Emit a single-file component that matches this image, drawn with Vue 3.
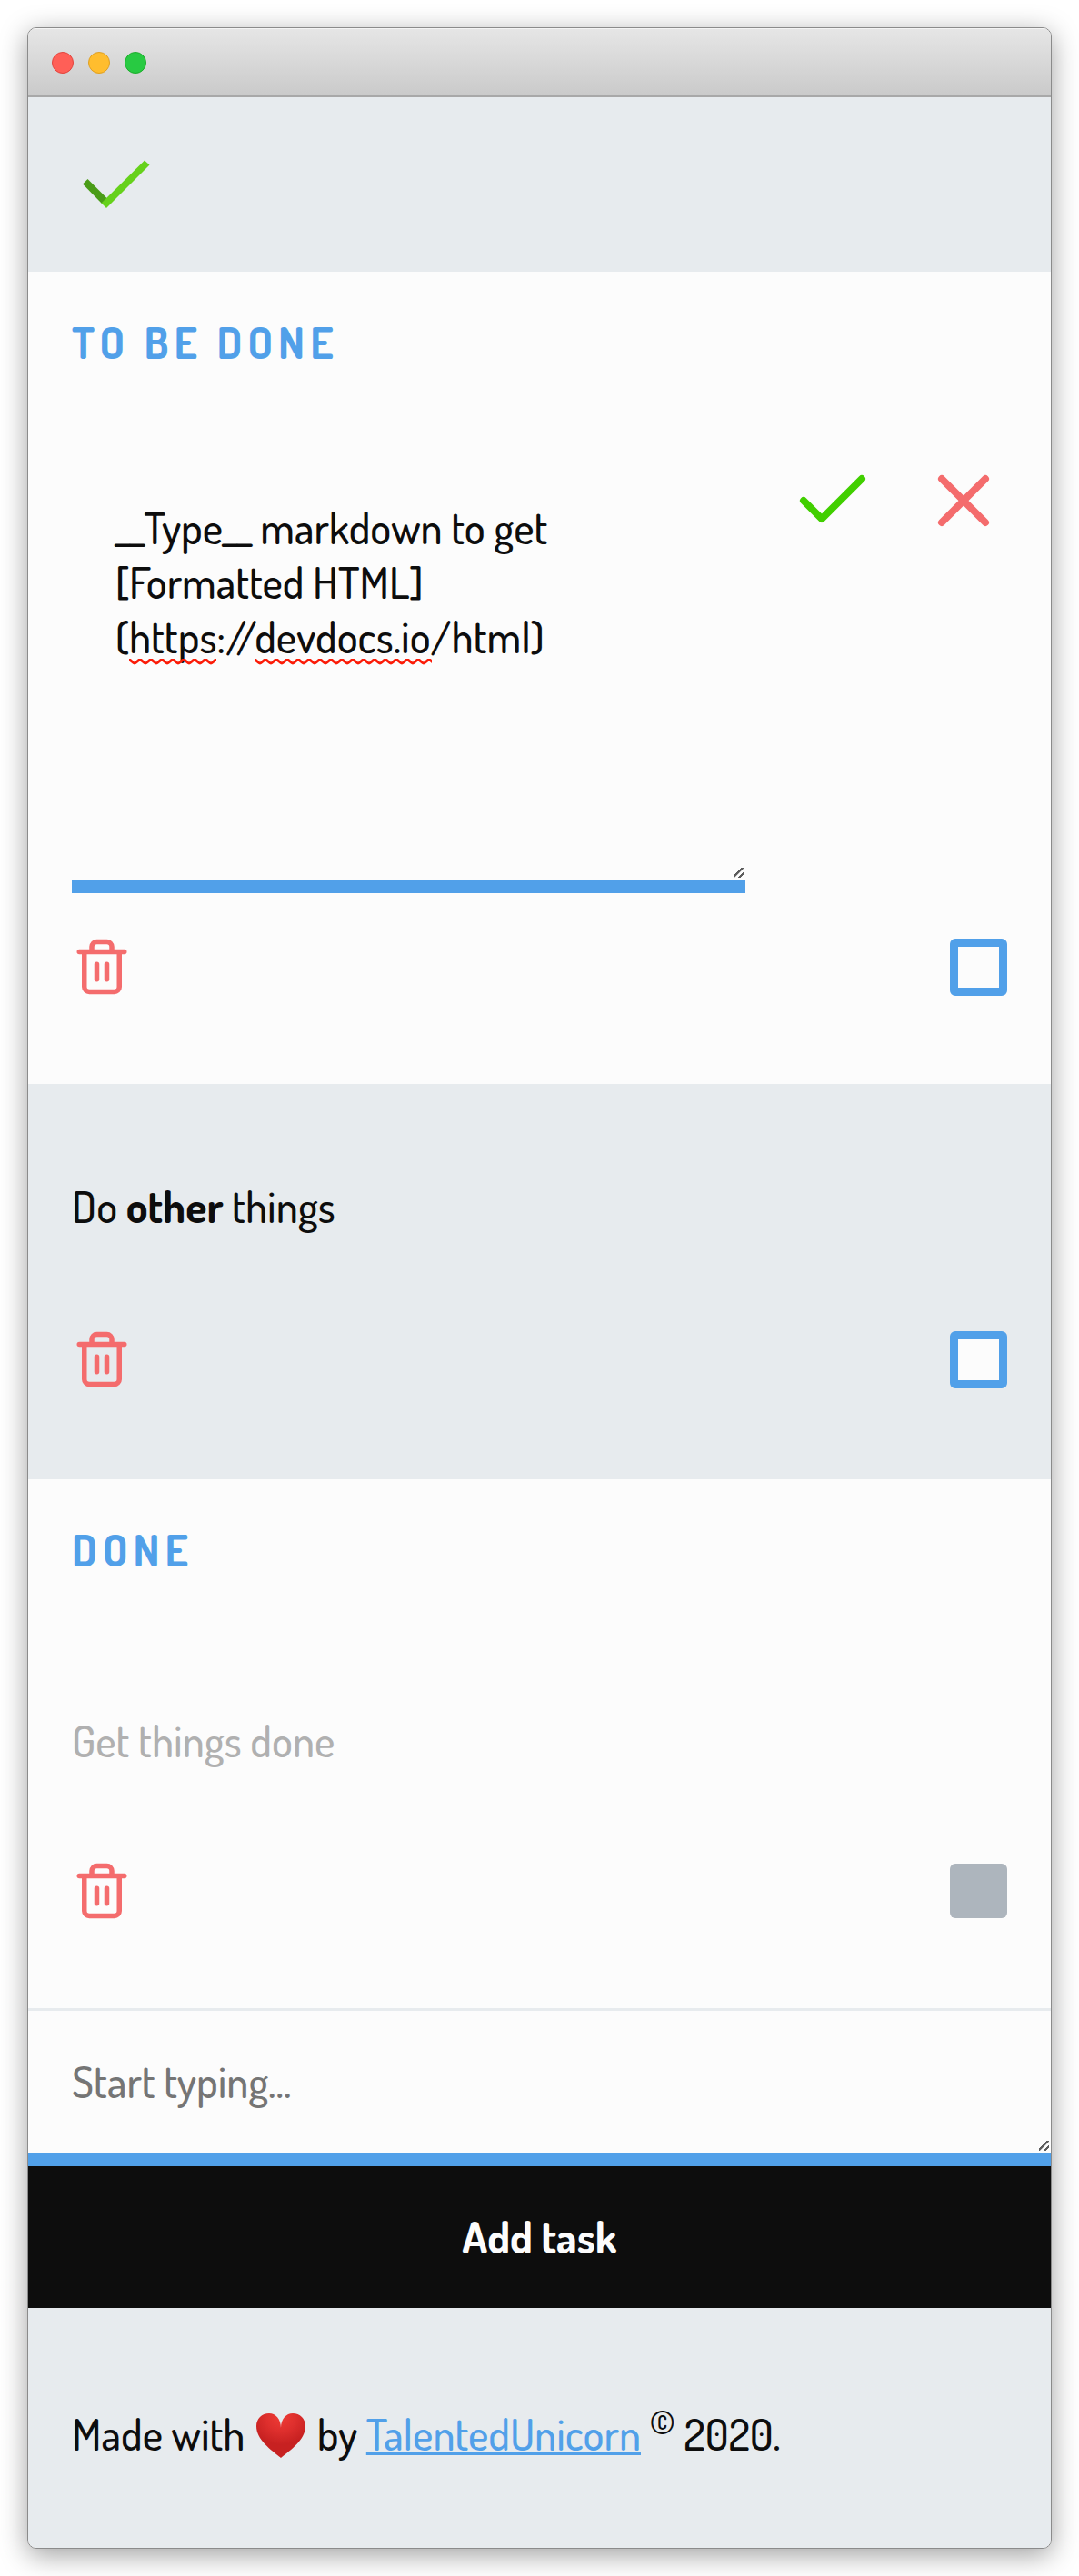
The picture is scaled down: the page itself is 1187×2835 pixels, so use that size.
<script setup>
import { ref } from 'vue'

const draft = ref('__Type__ markdown to get\n[Formatted HTML]\n(https://devdocs.io/html)')
const newTask = ref('')

// Wavy line used for the spell-check marks
function wave(width) {
  let d = 'M0 1'
  for (let x = 6, down = true; x <= width; x += 6, down = !down) {
    const from = down ? 1 : 5
    const to = down ? 5 : 1
    d += ` C${x - 4} ${from} ${x - 2} ${to} ${x} ${to}`
  }
  return d
}
</script>

<template>
  <div class="desktop">
    <div class="window">
      <div class="titlebar">
        <span class="light close"></span>
        <span class="light minimise"></span>
        <span class="light expand"></span>
      </div>

      <header class="header">
        <svg class="icon" viewBox="0 0 96 96" role="img" aria-label="Tasks">
          <path fill="#4a9c17" d="M12 47.5 17.500 42 39 63.500 33 69z" />
          <path fill="#66d11b" d="M80 21.500 85.500 26.500 38 74 32.500 68.500z" />
        </svg>
      </header>

      <main>
        <section>
          <h2>TO BE DONE</h2>
          <ul class="tasks">
            <li class="task">
              <div class="editor">
                <div class="field">
                  <textarea v-model="draft" class="draft" aria-label="Edit task" spellcheck="false"></textarea>
                  <svg class="mark mark-first" width="96" height="7" aria-hidden="true"><path :d="wave(96)" /></svg>
                  <svg class="mark mark-second" width="195" height="7" aria-hidden="true"><path :d="wave(198)" /></svg>
                </div>
                <button class="plain" type="button" aria-label="Save">
                  <svg class="icon stroke save" viewBox="0 0 24 24"><path d="M20 6 9 17l-5-5" /></svg>
                </button>
                <button class="plain" type="button" aria-label="Cancel">
                  <svg class="icon stroke danger" viewBox="0 0 24 24"><path d="M18 6 6 18M6 6l12 12" /></svg>
                </button>
              </div>
              <div class="actions">
                <button class="plain" type="button" aria-label="Delete">
                  <svg class="trash stroke danger" viewBox="0 0 24 24">
                    <path d="M3 6h18M19 6v14a2 2 0 0 1-2 2H7a2 2 0 0 1-2-2V6m3 0V4a2 2 0 0 1 2-2h4a2 2 0 0 1 2 2v2M10 11v6M14 11v6" />
                  </svg>
                </button>
                <input class="check" type="checkbox" aria-label="Mark as done" />
              </div>
            </li>
            <li class="task shaded">
              <p class="text">Do <strong>other</strong> things</p>
              <div class="actions">
                <button class="plain" type="button" aria-label="Delete">
                  <svg class="trash stroke danger" viewBox="0 0 24 24">
                    <path d="M3 6h18M19 6v14a2 2 0 0 1-2 2H7a2 2 0 0 1-2-2V6m3 0V4a2 2 0 0 1 2-2h4a2 2 0 0 1 2 2v2M10 11v6M14 11v6" />
                  </svg>
                </button>
                <input class="check" type="checkbox" aria-label="Mark as done" />
              </div>
            </li>
          </ul>
        </section>

        <section>
          <h2>DONE</h2>
          <ul class="tasks">
            <li class="task finished">
              <p class="text">Get things done</p>
              <div class="actions">
                <button class="plain" type="button" aria-label="Delete">
                  <svg class="trash stroke danger" viewBox="0 0 24 24">
                    <path d="M3 6h18M19 6v14a2 2 0 0 1-2 2H7a2 2 0 0 1-2-2V6m3 0V4a2 2 0 0 1 2-2h4a2 2 0 0 1 2 2v2M10 11v6M14 11v6" />
                  </svg>
                </button>
                <input class="check" type="checkbox" checked aria-label="Mark as not done" />
              </div>
            </li>
          </ul>
        </section>

        <form class="new-task" @submit.prevent>
          <textarea v-model="newTask" rows="1" placeholder="Start typing..." aria-label="New task"></textarea>
          <button class="add" type="submit">Add task</button>
        </form>
      </main>

      <footer class="footer">
        <p>
          Made with
          <svg class="heart" viewBox="0 0 54 50" role="img" aria-label="love">
            <defs>
              <radialGradient id="heart-fill" cx="0.5" cy="0.1" r="0.6">
                <stop offset="0" stop-color="#ee3b35" />
                <stop offset="0.5" stop-color="#de2f2d" />
                <stop offset="1" stop-color="#c72121" />
              </radialGradient>
            </defs>
            <path fill="url(#heart-fill)" d="M27 16C27 6 33 0 40 0c8 0 14 6 14 14 0 15-16 26-27 35C16 40 0 29 0 14 0 6 6 0 14 0c7 0 13 6 13 16z" />
          </svg>
          by <a href="#">TalentedUnicorn</a> <sup>©</sup> 2020.
        </p>
      </footer>
    </div>
  </div>
</template>

<style>
body {
  margin: 0;
  background: #fff;
}
</style>

<style scoped>
.desktop {
  padding: 30px;
  font-family: Dosis, "Liberation Sans Narrow", "Roboto Condensed", Lato, sans-serif;
  font-size: 48px;
  font-weight: 500;
  line-height: 60px;
  color: #0d0d0d;
}
.window {
  border: 1px solid #8b8b8b;
  border-radius: 10px;
  overflow: hidden;
  background: #fcfcfc;
  box-shadow: 0 7px 30px rgba(0, 0, 0, 0.38);
}
.titlebar {
  display: flex;
  align-items: center;
  gap: 16px;
  height: 72px;
  padding: 2px 26px 0;
  background: linear-gradient(#e6e6e6, #cacaca);
  border-bottom: 2px solid #a8a8a8;
  box-shadow: inset 0 1px #f4f4f4;
}
.light {
  box-sizing: border-box;
  width: 24px;
  height: 24px;
  border-radius: 50%;
}
.close { background: #ff5f57; border: 1px solid #e2453e; }
.minimise { background: #ffbd2e; border: 1px solid #dfa023; }
.expand { background: #28ca42; border: 1px solid #1dad2b; }

.header {
  padding: 48px;
  background: #e7ebee;
}
.icon {
  display: block;
  width: 96px;
  height: 96px;
}
h2 {
  margin: 0;
  padding: 47px 48px 1px;
  font-size: 48px;
  line-height: 60px;
  font-weight: 700;
  letter-spacing: 6px;
  color: #51a0e9;
}
.tasks {
  margin: 48px 0 0;
  padding: 0;
  list-style: none;
}
.task {
  padding: 48px 48px 96px;
}
.shaded {
  background: #e7ebee;
  border: solid #e7ebee;
  border-width: 3px 0;
}
.text {
  margin: 0;
  padding: 53px 0 58px;
}
.finished .text {
  padding-bottom: 55px;
  color: #b0b0b0;
}
.editor {
  display: flex;
  align-items: flex-start;
  gap: 48px;
}
.field {
  position: relative;
  flex: 1;
}
textarea {
  display: block;
  box-sizing: border-box;
  width: 100%;
  padding: 47px 48px;
  border: 0;
  border-bottom: 15px solid #51a0e9;
  border-radius: 0;
  outline: none;
  background: transparent;
  color: #0d0d0d;
  font: inherit;
}
textarea::placeholder {
  color: #757575;
}
textarea::-webkit-resizer {
  background: linear-gradient(135deg, transparent 6px, #5c5c5c 6px 8px, #c8c8c8 8px 9px, transparent 9px 11px, #5c5c5c 11px 13px, transparent 13px) 2px 2px / 11px 11px no-repeat;
}
.draft {
  height: 480px;
}
.mark {
  position: absolute;
  top: 222px;
  fill: none;
  stroke: #fb1c08;
  stroke-width: 3px;
}
.mark-first { left: 63px; }
.mark-second { left: 201px; }
.plain {
  display: block;
  padding: 0;
  border: 0;
  background: none;
  cursor: pointer;
}
.stroke {
  fill: none;
  stroke-width: 2;
  stroke-linecap: round;
  stroke-linejoin: round;
}
.save { stroke: #41cf00; }
.danger { stroke: #f46c6d; }
.actions {
  display: flex;
  justify-content: space-between;
  align-items: center;
  margin-top: 48px;
}
.trash {
  display: block;
  width: 66px;
  height: 66px;
}
.check {
  appearance: none;
  box-sizing: border-box;
  width: 63px;
  height: 63px;
  margin: 0;
  border: 9px solid #51a0e9;
  border-radius: 6px;
  background: #fcfcfc;
}
.check:checked {
  height: 60px;
  border: 0;
  background: #adb5bd;
}
.new-task {
  border-top: 3px solid #e7ebee;
}
.new-task textarea {
  height: 171px;
}
.add {
  display: block;
  width: 100%;
  padding: 47px 48px 49px;
  border: 0;
  background: #0d0d0d;
  color: #fcfcfc;
  font: inherit;
  font-weight: 700;
}
.footer {
  padding: 108px 48px 96px;
  background: #e7ebee;
}
.footer p {
  margin: 0;
}
.heart {
  width: 54px;
  height: 50px;
  margin: 0 3px;
  vertical-align: -9px;
}
a {
  color: #51a0e9;
  text-decoration-thickness: 3px;
  text-underline-offset: 2px;
}
sup {
  font-size: 40px;
  line-height: 0;
}
</style>
